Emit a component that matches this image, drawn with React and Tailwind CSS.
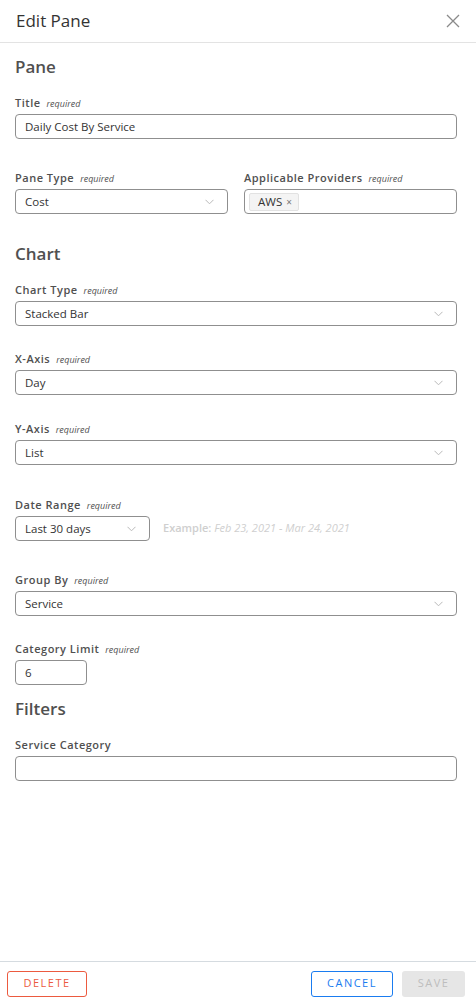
import React from 'react';

const font = { fontFamily: '"Open Sans", "Liberation Sans", sans-serif' };

function Chevron() {
  return (
    <svg width="9" height="6" viewBox="0 0 9 6" className="shrink-0">
      <path d="M0.5 0.8 L4.5 4.8 L8.5 0.8" fill="none" stroke="#b9b9b9" strokeWidth="1" />
    </svg>
  );
}

function Label({ text, required, className = '' }) {
  return (
    <div className={`h-[14px] leading-[14px] mb-[4px] flex items-baseline gap-[6px] ${className}`}>
      <span className="text-[11px] font-semibold tracking-[0.5px] text-[#505050]">{text}</span>
      {required && <span className="text-[9px] italic text-[#505050]">required</span>}
    </div>
  );
}

function Select({ value, className = 'w-full' }) {
  return (
    <div className={`h-[25px] border border-[#8f8f8f] rounded-[4px] flex items-center justify-between pl-[9px] pr-[13px] ${className}`}>
      <span className="text-[11.5px] text-[#333]">{value}</span>
      <Chevron />
    </div>
  );
}

function Input({ value, className = 'w-full' }) {
  return (
    <div className={`h-[25px] border border-[#8f8f8f] rounded-[4px] flex items-center pl-[9px] ${className}`}>
      <span className="text-[11.5px] text-[#333]">{value}</span>
    </div>
  );
}

function Heading({ children, className = '' }) {
  return (
    <div className={`h-[24px] leading-[24px] text-[17px] font-semibold text-[#505050] ${className}`}>
      {children}
    </div>
  );
}

export default function App() {
  return (
    <div style={font} className="h-screen w-full bg-white flex flex-col">
      <div className="h-[43px] border-b border-[#e3e3e3] flex items-center justify-between pl-[16px] pr-[16px] shrink-0">
        <span className="text-[17px] text-[#333]">Edit Pane</span>
        <svg width="14" height="14" viewBox="0 0 14 14">
          <path d="M1 1 L13 13 M13 1 L1 13" stroke="#8a8a8a" strokeWidth="1.3" />
        </svg>
      </div>

      <div className="flex-1 pl-[15px] pr-[19px]">
        <Heading className="mt-[12px]">Pane</Heading>

        <div className="mt-[17px]">
          <Label text="Title" required />
          <Input value="Daily Cost By Service" />
        </div>

        <div className="mt-[32px] flex gap-[16px]">
          <div className="flex-1">
            <Label text="Pane Type" required />
            <Select value="Cost" />
          </div>
          <div className="flex-1">
            <Label text="Applicable Providers" required />
            <div className="h-[25px] border border-[#8f8f8f] rounded-[4px] flex items-center pl-[4px]">
              <div className="h-[18px] pl-[8px] pr-[6px] bg-[#f4f4f4] border border-[#e2e2e2] rounded-[2px] flex items-center gap-[4px]">
                <span className="text-[11.5px] text-[#333]">AWS</span>
                <span className="text-[10px] text-[#777] leading-none">×</span>
              </div>
            </div>
          </div>
        </div>

        <Heading className="mt-[28px]">Chart</Heading>

        <div className="mt-[17px]">
          <Label text="Chart Type" required />
          <Select value="Stacked Bar" />
        </div>

        <div className="mt-[26px]">
          <Label text="X-Axis" required />
          <Select value="Day" />
        </div>

        <div className="mt-[27px]">
          <Label text="Y-Axis" required />
          <Select value="List" />
        </div>

        <div className="mt-[33px]">
          <Label text="Date Range" required />
          <div className="flex items-center gap-[13px]">
            <Select value="Last 30 days" className="w-[135px]" />
            <span className="text-[11px] text-[#cfcfcf]">
              <span className="font-semibold">Example: </span>
              <span className="italic">Feb 23, 2021 - Mar 24, 2021</span>
            </span>
          </div>
        </div>

        <div className="mt-[32px]">
          <Label text="Group By" required />
          <Select value="Service" />
        </div>

        <div className="mt-[26px]">
          <Label text="Category Limit" required />
          <Input value="6" className="w-[72px]" />
        </div>

        <Heading className="mt-[12px]">Filters</Heading>

        <div className="mt-[17px]">
          <Label text="Service Category" />
          <Input value="" />
        </div>
      </div>

      <div className="h-[44px] border-t border-[#d5dbe0] flex items-center justify-between pl-[7px] pr-[11px] shrink-0">
        <button className="h-[26px] w-[80px] border border-[#ec5a3f] rounded-[3px] text-[11px] tracking-[1.5px] text-[#ec5a3f]">
          DELETE
        </button>
        <div className="flex gap-[9px]">
          <button className="h-[26px] w-[82px] border border-[#1a7cf0] rounded-[3px] text-[11px] tracking-[1.5px] text-[#1a7cf0]">
            CANCEL
          </button>
          <button className="h-[26px] w-[63px] bg-[#e6e6e6] rounded-[3px] text-[11px] tracking-[1.5px] text-[#bdbdbd]">
            SAVE
          </button>
        </div>
      </div>
    </div>
  );
}
